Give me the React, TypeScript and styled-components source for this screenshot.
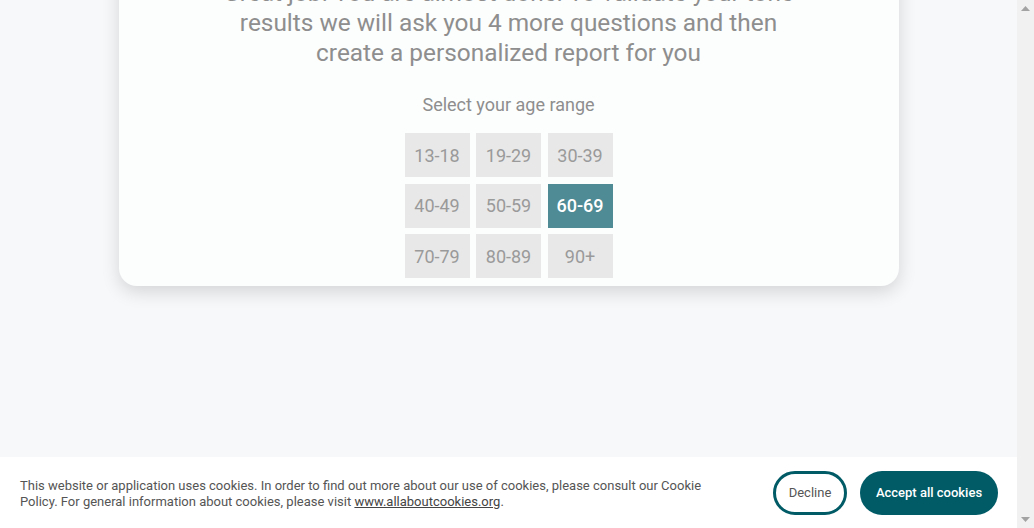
import React, { useState } from "react";
import styled, { createGlobalStyle } from "styled-components";

const GlobalStyle = createGlobalStyle`
  html, body {
    margin: 0;
    height: 100%;
    overflow: hidden;
    background: #f7f8fa;
  }
  body {
    font-family: Roboto, "Liberation Sans", Arial, sans-serif;
  }
`;

const Shell = styled.div`
  display: flex;
  height: 100vh;
`;

const Main = styled.main`
  flex: 1;
  position: relative;
  overflow: hidden;
  background: #f7f8fa;
  display: flex;
  flex-direction: column;
  align-items: center;
`;

const ScrollTrack = styled.div`
  width: 17px;
  background: #f1f1f1;
  display: flex;
  flex-direction: column;
  justify-content: space-between;
  align-items: center;
`;

const ScrollArrow = styled.div`
  height: 17px;
  width: 17px;
  display: flex;
  align-items: center;
  justify-content: center;
`;

const Card = styled.div`
  width: 780px;
  margin-top: -62px;
  padding: 40px 0 8px 0;
  background: #fcfdfd;
  border-radius: 18px;
  box-shadow: 0 6px 18px rgba(0, 0, 0, 0.14);
  display: flex;
  flex-direction: column;
  align-items: center;
`;

const Title = styled.div`
  max-width: 590px;
  font-size: 24.4px;
  line-height: 30px;
  color: #8e8e8e;
  text-align: center;
`;

const Label = styled.div`
  margin-top: 25px;
  font-size: 18px;
  line-height: 24px;
  color: #8e8e8e;
`;

const AgeGrid = styled.div`
  margin-top: 16px;
  display: grid;
  grid-template-columns: repeat(3, 65px);
  grid-auto-rows: 44px;
  gap: 6.5px 6.5px;
`;

const AgeButton = styled.button<{ $active?: boolean }>`
  border: none;
  padding: 0;
  font-family: Roboto, "Liberation Sans", Arial, sans-serif;
  font-size: 18px;
  font-weight: ${(p) => (p.$active ? 500 : 400)};
  color: ${(p) => (p.$active ? "#ffffff" : "#9a9a9a")};
  background: ${(p) => (p.$active ? "#4f8b94" : "#e8e8e8")};
  cursor: pointer;
`;

const CookieBar = styled.div`
  position: absolute;
  left: 0;
  right: 0;
  bottom: 0;
  height: 71px;
  background: #ffffff;
  display: flex;
  align-items: center;
  padding: 0 19px 0 20px;
  box-sizing: border-box;
`;

const CookieText = styled.p`
  margin: 0;
  margin-top: 2px;
  max-width: 700px;
  font-size: 13px;
  line-height: 16px;
  color: #555555;

  a {
    color: #444444;
    text-decoration: underline;
  }
`;

const Buttons = styled.div`
  margin-left: auto;
  display: flex;
  gap: 13px;
`;

const OutlineButton = styled.button`
  width: 74px;
  height: 44px;
  padding: 0;
  border: 3px solid #005b67;
  border-radius: 22px;
  background: #ffffff;
  color: #555555;
  font-family: Roboto, "Liberation Sans", Arial, sans-serif;
  font-size: 13px;
`;

const SolidButton = styled.button`
  width: 138px;
  height: 44px;
  padding: 0;
  border: none;
  border-radius: 22px;
  background: #005b67;
  color: #ffffff;
  font-family: Roboto, "Liberation Sans", Arial, sans-serif;
  font-size: 13px;
  font-weight: 500;
`;

const ages = ["13-18", "19-29", "30-39", "40-49", "50-59", "60-69", "70-79", "80-89", "90+"];

function Arrow({ down }: { down?: boolean }) {
  return (
    <ScrollArrow>
      <svg width="9" height="5" viewBox="0 0 9 5">
        <path d={down ? "M0 0 L9 0 L4.5 5 Z" : "M0 5 L4.5 0 L9 5 Z"} fill="#a3a3a3" />
      </svg>
    </ScrollArrow>
  );
}

export default function App() {
  const [selected, setSelected] = useState("60-69");

  return (
    <>
      <GlobalStyle />
      <Shell>
        <Main>
          <Card>
            <Title>
              Great job! You are almost done. To validate your tone results we will ask you 4 more
              questions and then create a personalized report for you
            </Title>
            <Label>Select your age range</Label>
            <AgeGrid>
              {ages.map((a) => (
                <AgeButton key={a} $active={a === selected} onClick={() => setSelected(a)}>
                  {a}
                </AgeButton>
              ))}
            </AgeGrid>
          </Card>
          <CookieBar>
            <CookieText>
              This website or application uses cookies. In order to find out more about our use of
              cookies, please consult our Cookie Policy. For general information about cookies,
              please visit <a href="#">www.allaboutcookies.org</a>.
            </CookieText>
            <Buttons>
              <OutlineButton>Decline</OutlineButton>
              <SolidButton>Accept all cookies</SolidButton>
            </Buttons>
          </CookieBar>
        </Main>
        <ScrollTrack>
          <Arrow />
          <Arrow down />
        </ScrollTrack>
      </Shell>
    </>
  );
}
